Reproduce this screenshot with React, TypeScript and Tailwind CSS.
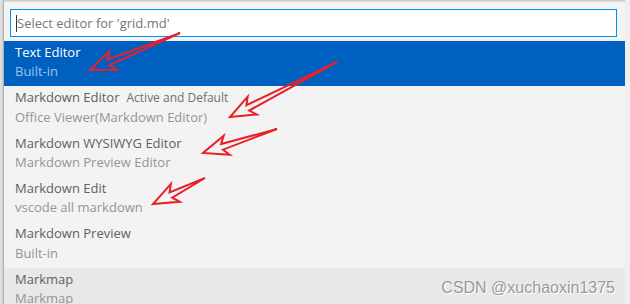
const rows = [
  { title: "Text Editor", desc: "Built-in", selected: true },
  { title: "Markdown Editor", extra: "Active and Default", desc: "Office Viewer(Markdown Editor)" },
  { title: "Markdown WYSIWYG Editor", desc: "Markdown Preview Editor" },
  { title: "Markdown Edit", desc: "vscode all markdown" },
  { title: "Markdown Preview", desc: "Built-in" },
  { title: "Markmap", desc: "Markmap", hover: true },
];

// hollow hand-drawn style arrow, tail -> tip
function arrowPoints(tx: number, ty: number, px: number, py: number) {
  const len = Math.hypot(px - tx, py - ty);
  const dx = (px - tx) / len;
  const dy = (py - ty) / len;
  const nx = -dy;
  const ny = dx;
  const head = 20;
  const shaft = 3;
  const barb = 10;
  const neckX = px - dx * head;
  const neckY = py - dy * head;
  const backX = px - dx * (head + 5);
  const backY = py - dy * (head + 5);
  const pts = [
    [tx, ty],
    [neckX + nx * shaft, neckY + ny * shaft],
    [backX + nx * barb, backY + ny * barb],
    [px, py],
    [backX - nx * barb, backY - ny * barb],
    [neckX - nx * shaft, neckY - ny * shaft],
  ];
  return pts.map((p) => p.join(",")).join(" ");
}

const arrows = [
  [180, 33, 90, 70],
  [337, 62, 230, 117],
  [277, 129, 203, 153],
  [205, 178, 153, 204],
];

export default function App() {
  return (
    <div className="relative w-[630px] h-[304px] overflow-hidden bg-[#ececec] font-['Open_Sans',sans-serif]">
      <div className="flex h-full">
        <div className="w-[4px] shrink-0 bg-[#e2e2e2] border-r border-[#c8c8c8]" />
        <div className="w-[621px] shrink-0 flex flex-col bg-[#f3f3f3] shadow-[0_0_4px_rgba(0,0,0,0.3)]">
          <div className="h-[2px] shrink-0 bg-gradient-to-b from-[#c4c4c4] to-[#e6e6e6]" />
          <div className="pt-[7px] pb-[4px] pl-[6px] pr-[8px]">
            <div className="h-[28px] bg-white border border-[#0090f1] flex items-center pl-[5px]">
              <span className="w-px h-[17px] bg-[#333]" />
              <span className="text-[13px] text-[#767676] leading-none">Select editor for 'grid.md'</span>
            </div>
          </div>
          <div className="flex flex-col">
            {rows.map((r) => (
              <div
                key={r.title + r.desc}
                className={
                  "h-[45.4px] shrink-0 pl-[11px] pt-[2px] " +
                  (r.selected ? "bg-[#0060c0]" : r.hover ? "bg-[#e8e8e8]" : "")
                }
              >
                <div className="h-[19px] flex items-center">
                  <span className={"text-[13px] " + (r.selected ? "text-white font-medium" : "text-[#616161]")}>
                    {r.title}
                  </span>
                  {r.extra && <span className="ml-[7px] text-[12px] text-[#717171]">{r.extra}</span>}
                </div>
                <div className="h-[20px] flex items-center">
                  <span className={"text-[13px] " + (r.selected ? "text-[#9cc0ea]" : "text-[#959595]")}>{r.desc}</span>
                </div>
              </div>
            ))}
          </div>
        </div>
        <div className="flex-1 bg-[#efefef]" />
      </div>

      <span className="absolute right-[15px] bottom-[4px] text-[16px] text-[#9a9a9a] font-['Liberation_Sans',sans-serif] [text-shadow:1px_1px_0_#ffffff]">
        CSDN @xuchaoxin1375
      </span>

      <svg className="absolute inset-0 pointer-events-none" width="630" height="304">
        {arrows.map((a, i) => (
          <polygon
            key={i}
            points={arrowPoints(a[0], a[1], a[2], a[3])}
            fill="none"
            stroke="#e8202a"
            strokeWidth="2"
            strokeLinejoin="miter"
          />
        ))}
      </svg>
    </div>
  );
}
